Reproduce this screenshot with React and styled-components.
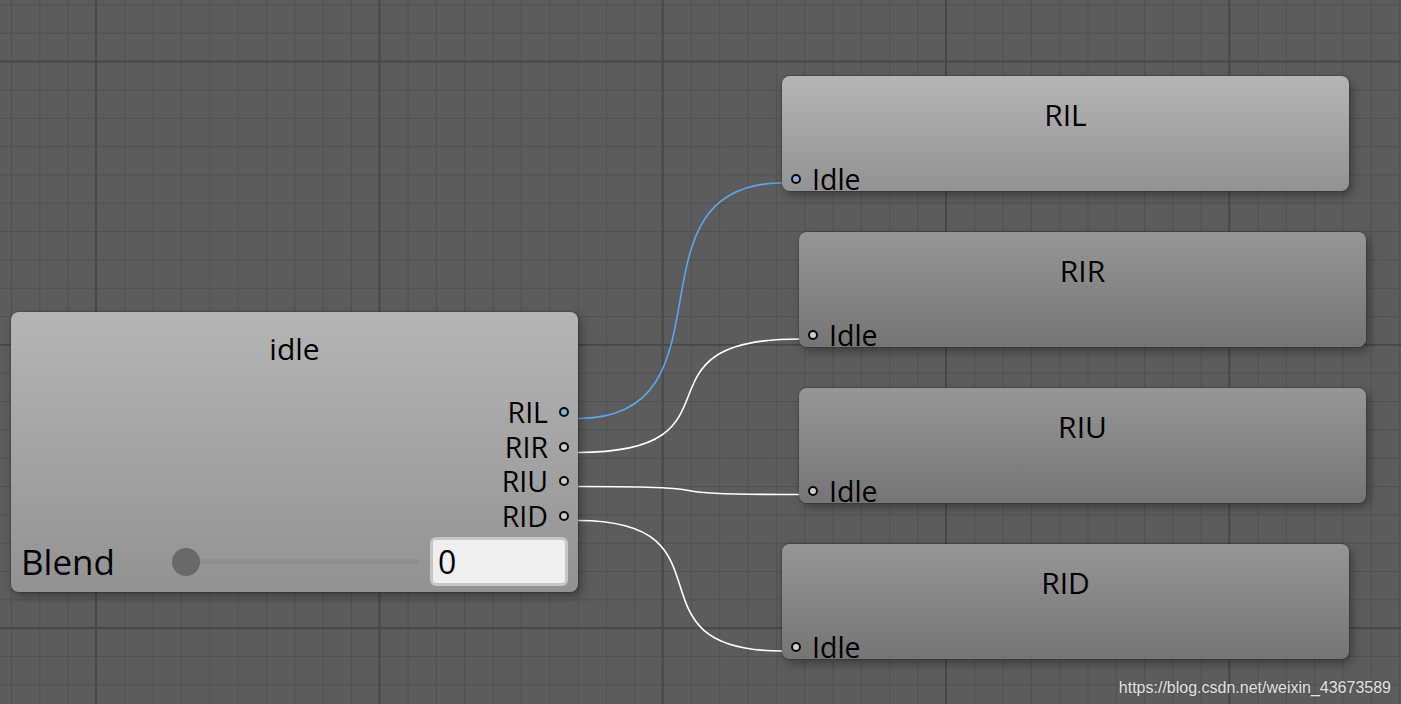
import React from "react";
import styled, { createGlobalStyle } from "styled-components";

/* Blend tree graph - idle node feeding four motion nodes */

const GlobalStyle = createGlobalStyle`
  html, body {
    margin: 0;
    padding: 0;
  }
  body {
    font-family: "Open Sans", "Noto Sans", sans-serif;
    background: #5b5b5b;
    overflow: hidden;
  }
`;

const Canvas = styled.div`
  position: relative;
  width: 100vw;
  height: 100vh;
  overflow: hidden;
  background-color: #5c5c5c;
  background-image:
    linear-gradient(to right, #484848 2px, transparent 2px),
    linear-gradient(to bottom, #484848 2px, transparent 2px),
    linear-gradient(to right, #505050 1px, transparent 1px),
    linear-gradient(to bottom, #505050 1px, transparent 1px);
  background-size: 283.33px 100%, 100% 283.33px, 28.333px 100%, 100% 28.333px;
  background-position: 95px 0, 0 60.5px, 11px 0, 0 4.5px;
`;

const Wires = styled.svg`
  position: absolute;
  left: 0;
  top: 0;
  width: 100%;
  height: 100%;
  pointer-events: none;
`;

const Node = styled.div`
  position: absolute;
  left: ${(p) => p.$x}px;
  top: ${(p) => p.$y}px;
  width: ${(p) => p.$w}px;
  height: ${(p) => p.$h}px;
  box-sizing: border-box;
  border-radius: 8px;
  background: ${(p) =>
    p.$active
      ? "linear-gradient(to bottom, #b5b5b5, #929292)"
      : "linear-gradient(to bottom, #969696, #757575)"};
  box-shadow: 0 0 0 1px rgba(0, 0, 0, 0.12), 3px 4px 10px rgba(0, 0, 0, 0.35);
  display: flex;
  flex-direction: column;
  color: #000;
`;

const Title = styled.div`
  text-align: center;
  font-size: 30px;
  line-height: 40px;
  padding-top: ${(p) => p.$pad}px;
`;

const Outputs = styled.div`
  margin-top: 26px;
  display: flex;
  flex-direction: column;
  align-items: flex-end;
  padding-right: 9px;
`;

const OutRow = styled.div`
  height: 34.5px;
  display: flex;
  align-items: center;
  gap: 11px;
  font-size: 28.5px;
`;

const InRow = styled.div`
  margin-top: auto;
  height: 24px;
  display: flex;
  align-items: center;
  gap: 11px;
  padding-left: 9px;
  font-size: 28.5px;
  line-height: 24px;
`;

const Port = styled.span`
  width: 10px;
  height: 10px;
  box-sizing: border-box;
  border-radius: 50%;
  border: 2.5px solid #0a0a0a;
  background: ${(p) => (p.$linked ? "#7fb1e6" : "#cdcdcd")};
  flex: none;
`;

const ParamRow = styled.div`
  margin-top: auto;
  display: grid;
  grid-template-columns: 147px 1fr 138px;
  column-gap: 5px;
  align-items: center;
  padding: 0 10px 6px 10px;
`;

const ParamLabel = styled.span`
  font-size: 35px;
  line-height: 47px;
`;

const Slider = styled.div`
  position: relative;
  height: 28px;
  display: flex;
  align-items: center;
`;

const Track = styled.div`
  margin-left: 14px;
  width: 232px;
  height: 5px;
  background: #8f8f8f;
`;

const Knob = styled.div`
  position: absolute;
  left: -1px;
  top: 0;
  width: 28px;
  height: 28px;
  border-radius: 50%;
  background: #696969;
`;

const NumberBox = styled.div`
  height: 49px;
  box-sizing: border-box;
  border: 3px solid #c6c6c6;
  border-radius: 6px;
  background: #efefef;
  font-size: 32px;
  line-height: 43px;
  padding-left: 5px;
`;

const Watermark = styled.div`
  position: absolute;
  right: 10px;
  bottom: 7px;
  font-family: "Liberation Sans", Arial, sans-serif;
  font-size: 16px;
  color: #e2e2e2;
  text-shadow: 0 0 2px rgba(0, 0, 0, 0.25);
`;

const children = [
  { name: "RIL", x: 782, y: 76, active: true, from: 418.5, to: 183, color: "#5fa3ec" },
  { name: "RIR", x: 799, y: 232, active: false, from: 452.5, to: 339, color: "#ffffff" },
  { name: "RIU", x: 799, y: 388, active: false, from: 486.5, to: 494.5, color: "#ffffff" },
  { name: "RID", x: 782, y: 544, active: false, from: 520.5, to: 651, color: "#ffffff" },
];

const wirePath = (sx, sy, ex, ey) => {
  const t = (ex - sx) * 0.8;
  return `M ${sx} ${sy} C ${sx + t} ${sy}, ${ex - t} ${ey}, ${ex} ${ey}`;
};

const App = () => {
  return (
    <>
      <GlobalStyle />
      <Canvas>
        <Wires>
          {children.map((c) => (
            <path
              key={c.name}
              d={wirePath(578, c.from, c.x, c.to)}
              fill="none"
              stroke={c.color}
              strokeWidth="1.6"
            />
          ))}
        </Wires>

        <Node $x={11} $y={312} $w={567} $h={280} $active>
          <Title $pad={17}>idle</Title>
          <Outputs>
            {children.map((c) => (
              <OutRow key={c.name}>
                {c.name}
                <Port $linked={c.active} />
              </OutRow>
            ))}
          </Outputs>
          <ParamRow>
            <ParamLabel>Blend</ParamLabel>
            <Slider>
              <Track />
              <Knob />
            </Slider>
            <NumberBox>0</NumberBox>
          </ParamRow>
        </Node>

        {children.map((c) => (
          <Node key={c.name} $x={c.x} $y={c.y} $w={567} $h={115} $active={c.active}>
            <Title $pad={19}>{c.name}</Title>
            <InRow>
              <Port $linked={c.active} />
              Idle
            </InRow>
          </Node>
        ))}

        <Watermark>https://blog.csdn.net/weixin_43673589</Watermark>
      </Canvas>
    </>
  );
};

export default App;
